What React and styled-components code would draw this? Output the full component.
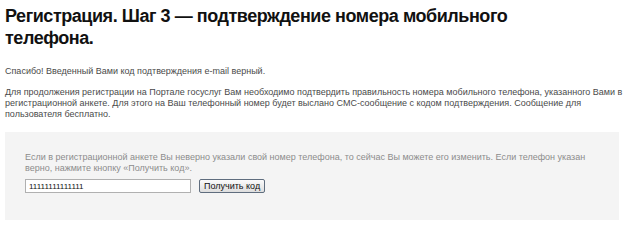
import React from "react";
import styled, { createGlobalStyle } from "styled-components";

const GlobalStyle = createGlobalStyle`
  html, body {
    margin: 0;
    padding: 0;
    background: #fff;
  }
  body {
    font-family: "Liberation Sans", Arial, sans-serif;
  }
`;

function App() {
  return (
    <>
      <GlobalStyle />
      <Page>
        <Title>Регистрация. Шаг 3 — подтверждение номера мобильного телефона.</Title>
        <Text>Спасибо! Введенный Вами код подтверждения e-mail верный.</Text>
        <Text>
          Для продолжения регистрации на Портале госуслуг Вам необходимо подтвердить правильность номера
          мобильного телефона, указанного Вами в регистрационной анкете. Для этого на Ваш телефонный номер
          будет выслано СМС-сообщение с кодом подтверждения. Сообщение для пользователя бесплатно.
        </Text>
        <Box>
          <Hint>
            Если в регистрационной анкете Вы неверно указали свой номер телефона, то сейчас Вы можете его
            изменить. Если телефон указан верно, нажмите кнопку «Получить код».
          </Hint>
          <FormRow>
            <PhoneInput defaultValue="11111111111111" />
            <SubmitButton type="button">Получить код</SubmitButton>
          </FormRow>
        </Box>
      </Page>
    </>
  );
}

export default App;

const Page = styled.div`
  width: 614px;
  padding: 5px 0 0 5px;
`;

const Title = styled.h1`
  margin: 0 0 17px;
  font-size: 18px;
  line-height: 22px;
  font-weight: bold;
  letter-spacing: -0.45px;
  color: #111;
  width: 560px;
`;

const Text = styled.p`
  width: 618px;
  margin: 0 0 10px;
  font-size: 9px;
  line-height: 11px;
  color: #4a4a4a;
`;

const Box = styled.div`
  box-sizing: border-box;
  margin-top: 12px;
  height: 88px;
  width: 614px;
  background: #f4f4f4;
  padding: 20px 20px 0;
`;

const Hint = styled.p`
  margin: 0 0 5px;
  font-size: 9px;
  line-height: 11px;
  color: #8c8c8c;
`;

const FormRow = styled.div`
  display: flex;
  align-items: center;
  gap: 8px;
`;

const PhoneInput = styled.input`
  box-sizing: border-box;
  width: 166px;
  height: 14px;
  padding: 0 3px;
  border: 1px solid #b0b0b0;
  background: #fff;
  font-family: "Liberation Sans", Arial, sans-serif;
  font-size: 8px;
  color: #111;
  outline: none;
`;

const SubmitButton = styled.button`
  box-sizing: border-box;
  height: 14px;
  padding: 0 4px;
  border: 1px solid #5f6d7e;
  border-radius: 2px;
  background: linear-gradient(#fbfbfb, #dedede);
  font-family: "Liberation Sans", Arial, sans-serif;
  font-size: 9px;
  line-height: 12px;
  color: #111;
`;
